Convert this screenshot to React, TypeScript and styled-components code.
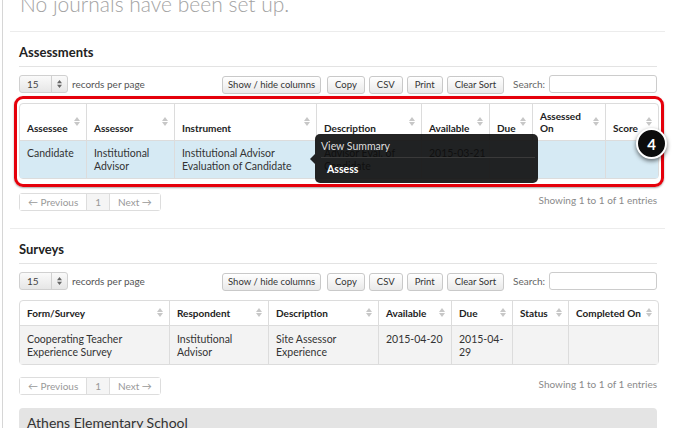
import styled, { createGlobalStyle } from "styled-components";

const GlobalStyle = createGlobalStyle`
  html, body {
    margin: 0;
    padding: 0;
    background: #fff;
  }
  body {
    font-family: Lato, "Open Sans", sans-serif;
    color: #333;
    overflow: hidden;
  }
`;

const Page = styled.div`
  margin-left: 2px;
  border-left: 1px solid #d6d6d6;
  min-height: 428px;
  padding: 0 8px 0 7px;
`;

const JournalBlock = styled.div`
  padding: 0 10px 15px;
  border-bottom: 1px solid #ececec;
`;

const Muted = styled.h1`
  margin: -8px 0 0;
  font-size: 21px;
  line-height: 24px;
  font-weight: 300;
  color: #a3a3a3;
`;

const Section = styled.section<{ $divider?: boolean }>`
  padding: 12px 8px 17px 9px;
  border-bottom: ${({ $divider }) => ($divider ? "1px solid #ececec" : "none")};
`;

const Heading = styled.h2`
  margin: 0 0 8px;
  padding-bottom: 6px;
  border-bottom: 1px solid #e3e3e3;
  font-size: 13px;
  line-height: 16px;
  font-weight: 700;
  color: #222;
`;

const Controls = styled.div`
  display: flex;
  align-items: center;
  height: 18px;
  margin-bottom: 10px;
  font-size: 10px;
  color: #555;
`;

const LengthSelect = styled.div`
  display: flex;
  align-items: stretch;
  width: 47px;
  height: 16px;
  border: 1px solid #d0d0d0;
  border-radius: 3px;
  background: linear-gradient(#fafafa, #e6e6e6);
  margin-right: 4px;
`;

const SelectValue = styled.span`
  flex: 1;
  padding-left: 7px;
  line-height: 16px;
  color: #444;
`;

const SelectArrows = styled.span`
  width: 15px;
  border-left: 1px solid #d0d0d0;
  display: flex;
  align-items: center;
  justify-content: center;
`;

const Spacer = styled.div`
  flex: 1;
`;

const ButtonGroup = styled.div`
  display: flex;
  gap: 4px;
  margin-top: 2px;
`;

const ToolButton = styled.button<{ $wide?: boolean }>`
  height: 18px;
  padding: 0 ${({ $wide }) => ($wide ? "5px" : "7px")};
  margin-right: ${({ $wide }) => ($wide ? "2px" : "0")};
  border: 1px solid #c9c9c9;
  border-radius: 3px;
  background: linear-gradient(#ffffff, #e9e9e9);
  font-family: Lato, "Open Sans", sans-serif;
  font-size: 9.5px;
  color: #333;
  line-height: 16px;
`;

const SearchLabel = styled.label`
  margin-left: 9px;
  margin-right: 4px;
  font-size: 10px;
  color: #666;
`;

const SearchInput = styled.input`
  box-sizing: border-box;
  width: 108px;
  height: 18px;
  border: 1px solid #ccc;
  border-radius: 3px;
  padding: 0 4px;
  outline: none;
`;

const TableWrap = styled.div`
  position: relative;
`;

const Table = styled.table`
  width: 638px;
  table-layout: fixed;
  border-collapse: separate;
  border-spacing: 0;
  border: 1px solid #dcdcdc;
  border-radius: 4px;
  font-size: 10.5px;
`;

const Th = styled.th`
  position: relative;
  text-align: left;
  vertical-align: bottom;
  font-weight: 700;
  font-size: 10px;
  color: #222;
  line-height: 12px;
  white-space: nowrap;
  padding: 6px 10px 6px 7px;
  border-bottom: 1px solid #dcdcdc;
  & + & {
    border-left: 1px solid #dcdcdc;
  }
`;

const SortMark = styled.svg`
  position: absolute;
  right: 6px;
  top: 50%;
  margin-top: -5px;
`;

const Td = styled.td<{ $tone: string; $top: number; $nowrap?: boolean }>`
  vertical-align: top;
  background: ${({ $tone }) => $tone};
  line-height: 12.5px;
  padding: ${({ $top }) => $top}px 4px 6px 7px;
  white-space: ${({ $nowrap }) => ($nowrap ? "nowrap" : "normal")};
  color: #333;
  & + & {
    border-left: 1px solid #dcdcdc;
  }
`;

const RedBox = styled.div`
  position: absolute;
  top: -7px;
  left: -5px;
  right: -7px;
  bottom: -8px;
  border: 3px solid #e5000b;
  border-radius: 9px;
  box-shadow: 0 1px 2px rgba(0, 0, 0, 0.35);
  pointer-events: none;
`;

const Badge = styled.div`
  position: absolute;
  left: 617px;
  top: 25px;
  width: 27px;
  height: 27px;
  border: 2px solid #fff;
  border-radius: 50%;
  background: #0c0c0c;
  color: #fff;
  font-size: 15px;
  font-weight: 700;
  display: flex;
  align-items: center;
  justify-content: center;
  box-shadow: 0 2px 4px rgba(0, 0, 0, 0.55);
`;

const Popover = styled.div`
  position: absolute;
  left: 296px;
  top: 31px;
  width: 223px;
  height: 49px;
  box-sizing: border-box;
  border-radius: 5px;
  background: rgba(12, 12, 12, 0.9);
  color: #e8e8e8;
  font-size: 10.5px;
  padding: 6px 3px 0 6px;
  &::before {
    content: "";
    position: absolute;
    left: -5px;
    top: 20px;
    border-style: solid;
    border-width: 5px 5px 5px 0;
    border-color: transparent rgba(12, 12, 12, 0.9) transparent transparent;
  }
`;

const PopItem = styled.div<{ $bold?: boolean }>`
  line-height: 12px;
  font-weight: ${({ $bold }) => ($bold ? 700 : 400)};
  color: ${({ $bold }) => ($bold ? "#fff" : "#ddd")};
  padding: ${({ $bold }) => ($bold ? "5px 0 0 6px" : "0 0 5px")};
  & + & {
    border-top: 1px solid #3a3a3a;
  }
`;

const PagerRow = styled.div<{ $gap: number }>`
  display: flex;
  justify-content: space-between;
  align-items: center;
  margin-top: ${({ $gap }) => $gap}px;
`;

const Pager = styled.div`
  display: flex;
  height: 18px;
  border: 1px solid #ddd;
  border-radius: 3px;
  box-sizing: border-box;
`;

const PageItem = styled.span<{ $active?: boolean }>`
  padding: 0 8px;
  line-height: 16px;
  font-size: 10px;
  color: #999;
  background: ${({ $active }) => ($active ? "#f5f5f5" : "#fff")};
  & + & {
    border-left: 1px solid #ddd;
  }
`;

const Info = styled.span`
  font-size: 10px;
  color: #8a8a8a;
  margin-top: -5px;
`;

const SchoolPanel = styled.div`
  margin-top: 13px;
  padding: 6px 8px 12px;
  background: #e4e4e4;
  border-radius: 4px 4px 0 0;
  font-size: 14px;
  line-height: 18px;
  color: #333;
`;

function Sort() {
  return (
    <SortMark width="6" height="9" viewBox="0 0 6 9">
      <path d="M0 4 L3 0 L6 4 Z M0 5 L3 9 L6 5 Z" fill="#c7c7c7" />
    </SortMark>
  );
}

function ToolBar() {
  return (
    <Controls>
      <LengthSelect>
        <SelectValue>15</SelectValue>
        <SelectArrows>
          <svg width="5" height="8" viewBox="0 0 5 8">
            <path d="M0 3.2 L2.5 0 L5 3.2 Z M0 4.8 L2.5 8 L5 4.8 Z" fill="#666" />
          </svg>
        </SelectArrows>
      </LengthSelect>
      records per page
      <Spacer />
      <ButtonGroup>
        <ToolButton $wide>Show / hide columns</ToolButton>
        <ToolButton>Copy</ToolButton>
        <ToolButton>CSV</ToolButton>
        <ToolButton>Print</ToolButton>
        <ToolButton>Clear Sort</ToolButton>
      </ButtonGroup>
      <SearchLabel>Search:</SearchLabel>
      <SearchInput />
    </Controls>
  );
}

function Paging({ gap }: { gap: number }) {
  return (
    <PagerRow $gap={gap}>
      <Pager>
        <PageItem>← Previous</PageItem>
        <PageItem $active>1</PageItem>
        <PageItem>Next →</PageItem>
      </Pager>
      <Info>Showing 1 to 1 of 1 entries</Info>
    </PagerRow>
  );
}

const assessmentCols = [
  { label: "Assessee", w: 66 },
  { label: "Assessor", w: 88 },
  { label: "Instrument", w: 142 },
  { label: "Description", w: 105 },
  { label: "Available", w: 68 },
  { label: "Due", w: 43 },
  { label: "Assessed On", w: 73 },
  { label: "Score", w: 53 },
];

const assessmentRow = [
  "Candidate",
  "Institutional Advisor",
  "Institutional Advisor Evaluation of Candidate",
  "Advisor Eval. of Candidate",
  "2015-03-21",
  "",
  "",
  "",
];

const surveyCols = [
  { label: "Form/Survey", w: 149 },
  { label: "Respondent", w: 99 },
  { label: "Description", w: 110 },
  { label: "Available", w: 73 },
  { label: "Due", w: 61 },
  { label: "Status", w: 56 },
  { label: "Completed On", w: 90 },
];

const surveyRow = [
  "Cooperating Teacher Experience Survey",
  "Institutional Advisor",
  "Site Assessor Experience",
  "2015-04-20",
  "2015-04-29",
  "",
  "",
];

export default function App() {
  return (
    <>
      <GlobalStyle />
      <Page>
        <JournalBlock>
          <Muted>No journals have been set up.</Muted>
        </JournalBlock>

        <Section $divider>
          <Heading>Assessments</Heading>
          <ToolBar />
          <TableWrap>
            <Table>
              <colgroup>
                {assessmentCols.map((c) => (
                  <col key={c.label} style={{ width: c.w }} />
                ))}
              </colgroup>
              <thead>
                <tr>
                  {assessmentCols.map((c) => (
                    <Th key={c.label}>
                      {c.label === "Assessed On" ? (
                        <>
                          Assessed
                          <br />
                          On
                        </>
                      ) : (
                        c.label
                      )}
                      <Sort />
                    </Th>
                  ))}
                </tr>
              </thead>
              <tbody>
                <tr>
                  {assessmentRow.map((v, i) => (
                    <Td key={i} $tone="#d6eaf4" $top={6} $nowrap={i === 4}>
                      {v}
                    </Td>
                  ))}
                </tr>
              </tbody>
            </Table>
            <RedBox />
            <Popover>
              <PopItem>View Summary</PopItem>
              <PopItem $bold>Assess</PopItem>
            </Popover>
            <Badge>4</Badge>
          </TableWrap>
          <Paging gap={14} />
        </Section>

        <Section>
          <Heading>Surveys</Heading>
          <ToolBar />
          <Table>
            <colgroup>
              {surveyCols.map((c) => (
                <col key={c.label} style={{ width: c.w }} />
              ))}
            </colgroup>
            <thead>
              <tr>
                {surveyCols.map((c) => (
                  <Th key={c.label}>
                    {c.label}
                    <Sort />
                  </Th>
                ))}
              </tr>
            </thead>
            <tbody>
              <tr>
                {surveyRow.map((v, i) => (
                  <Td key={i} $tone="#f3f3f3" $top={7} $nowrap={i === 3}>
                    {v}
                  </Td>
                ))}
              </tr>
            </tbody>
          </Table>
          <Paging gap={12} />
          <SchoolPanel>Athens Elementary School</SchoolPanel>
        </Section>
      </Page>
    </>
  );
}
